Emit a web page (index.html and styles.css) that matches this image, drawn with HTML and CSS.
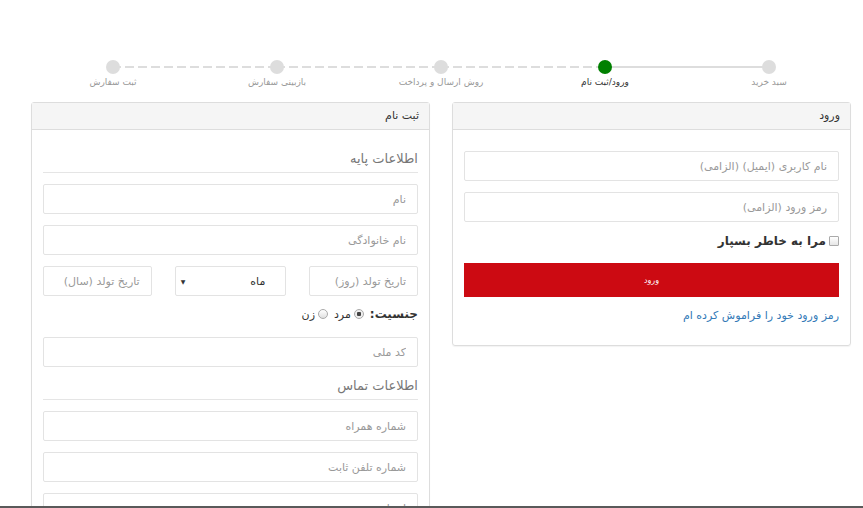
FILE: index.html
```html
<!DOCTYPE html>
<html lang="fa" dir="rtl">
<head>
    <meta charset="UTF-8">
    <meta name="viewport" content="width=device-width, initial-scale=1.0">
    <title>ثبت سفارش</title>
    <link rel="stylesheet" href="styles.css">
</head>
<body>
    <div class="page">
        <ul class="steps">
            <li class="step done"><span class="dot"></span><span class="step-label">سبد خرید</span></li>
            <li class="step active"><span class="dot"></span><span class="step-label">ورود/ثبت نام</span></li>
            <li class="step"><span class="dot"></span><span class="step-label">روش ارسال و پرداخت</span></li>
            <li class="step"><span class="dot"></span><span class="step-label">بازبینی سفارش</span></li>
            <li class="step"><span class="dot"></span><span class="step-label">ثبت سفارش</span></li>
        </ul>

        <div class="panels">
            <!-- login -->
            <div class="panel login-panel">
                <div class="panel-heading">ورود</div>
                <div class="panel-body">
                    <input class="field" type="text" placeholder="نام کاربری (ایمیل) (الزامی)">
                    <input class="field" type="password" placeholder="رمز ورود (الزامی)">
                    <label class="remember"><span class="check-box"></span>مرا به خاطر بسپار</label>
                    <button class="login-btn">ورود</button>
                    <a href="#" class="forgot">رمز ورود خود را فراموش کرده ام</a>
                </div>
            </div>

            <!-- register -->
            <div class="panel register-panel">
                <div class="panel-heading">ثبت نام</div>
                <div class="panel-body">
                    <h4 class="section-title">اطلاعات پایه</h4>
                    <input class="field" type="text" placeholder="نام">
                    <input class="field" type="text" placeholder="نام خانوادگی">
                    <div class="birth-row">
                        <input class="field" type="text" placeholder="تاریخ تولد (روز)">
                        <div class="field select-box"><span>ماه</span><span class="arrow">▼</span></div>
                        <input class="field" type="text" placeholder="تاریخ تولد (سال)">
                    </div>
                    <div class="gender-row">
                        <b>جنسیت:</b>
                        <span class="radio checked"></span><span>مرد</span>
                        <span class="radio"></span><span>زن</span>
                    </div>
                    <input class="field" type="text" placeholder="کد ملی">
                    <h4 class="section-title">اطلاعات تماس</h4>
                    <input class="field" type="text" placeholder="شماره همراه">
                    <input class="field" type="text" placeholder="شماره تلفن ثابت">
                    <input class="field" type="text" placeholder="ایمیل">
                </div>
            </div>
        </div>
    </div>
    <div class="taskbar"></div>
</body>
</html>
```

FILE: styles.css
```css
html {
    overflow: hidden;
}

body {
    margin: 0;
    background: #fff;
    color: #333;
    font-family: 'DejaVu Sans', Tahoma, sans-serif;
    font-size: 11px;
    direction: rtl;
}

.page {
    margin: 0 12px 0 31px;
}

/* steps */
.steps {
    display: flex;
    list-style: none;
    margin: 0;
    padding: 60px 0 0;
}

.step {
    flex: 1;
    position: relative;
    display: flex;
    flex-direction: column;
    align-items: center;
}

.step::after {
    content: '';
    position: absolute;
    top: 6px;
    right: 50%;
    width: 100%;
    height: 2px;
    background: repeating-linear-gradient(to left, #ddd 0 9px, transparent 9px 13px);
}

.step.done::after {
    background: #ddd;
}

.step:last-child::after {
    display: none;
}

.dot {
    position: relative;
    z-index: 1;
    width: 14px;
    height: 14px;
    border-radius: 50%;
    background: #ddd;
}

.step.active .dot {
    background: #008000;
}

.step-label {
    margin-top: 3px;
    font-size: 9px;
    color: #999;
}

.step.active .step-label {
    color: #333;
}

/* panels */
.panels {
    display: flex;
    gap: 22px;
    align-items: flex-start;
    margin-top: 15px;
}

.panel {
    flex: 1;
    border: 1px solid #ddd;
    border-radius: 3px;
    box-shadow: 0 1px 1px rgba(0, 0, 0, 0.05);
}

.panel-heading {
    height: 26px;
    line-height: 26px;
    padding: 0 10px;
    background: #f5f5f5;
    border-bottom: 1px solid #ddd;
    font-size: 11px;
}

.panel-body {
    padding: 21px 11px 11px;
}

.field {
    display: block;
    box-sizing: border-box;
    width: 100%;
    height: 30px;
    margin: 0 0 11px;
    padding: 0 11px;
    border: 1px solid #e3e3e3;
    border-radius: 2px;
    font-family: inherit;
    font-size: 11px;
    color: #555;
    background: #fff;
    outline: none;
}

.field::placeholder {
    color: #999;
}

.login-panel .panel-body {
    padding-bottom: 23px;
}

.remember {
    display: flex;
    align-items: center;
    gap: 3px;
    height: 16px;
    margin: 1px 0 14px;
    font-weight: bold;
    font-size: 12px;
}

.check-box {
    width: 8px;
    height: 8px;
    border: 1px solid #aaa;
    border-radius: 1px;
    background: linear-gradient(#fff, #e6e6e6);
}

.login-btn {
    display: block;
    width: 100%;
    height: 34px;
    border: none;
    background: #cc0a12;
    color: #fff;
    font-family: inherit;
    font-size: 8px;
    cursor: pointer;
}

.forgot {
    display: block;
    margin-top: 12px;
    color: #337ab7;
    text-decoration: none;
    font-size: 11px;
}

.section-title {
    margin: 0 0 11px;
    padding-bottom: 6px;
    border-bottom: 1px solid #e5e5e5;
    font-weight: normal;
    font-size: 13px;
    color: #777;
}

.birth-row {
    display: flex;
    gap: 23px;
}

.birth-row .field {
    flex: 1;
}

.select-box {
    display: flex;
    align-items: center;
    justify-content: space-between;
    padding: 0 20px 0 5px;
    color: #333;
}

.select-box .arrow {
    font-size: 6px;
}

.gender-row {
    display: flex;
    align-items: center;
    gap: 3px;
    height: 14px;
    margin: 0 0 16px;
    font-size: 11px;
}

.gender-row b {
    font-size: 12px;
}

.radio {
    width: 8px;
    height: 8px;
    border: 1px solid #aaa;
    border-radius: 50%;
    background: linear-gradient(#fff, #e0e0e0);
    margin-right: 3px;
}

.radio.checked {
    background: radial-gradient(circle, #444 0 2px, #eee 2.5px);
}

.taskbar {
    position: fixed;
    left: 0;
    right: 0;
    bottom: 0;
    height: 2px;
    background: #5a5a5a;
}
```
